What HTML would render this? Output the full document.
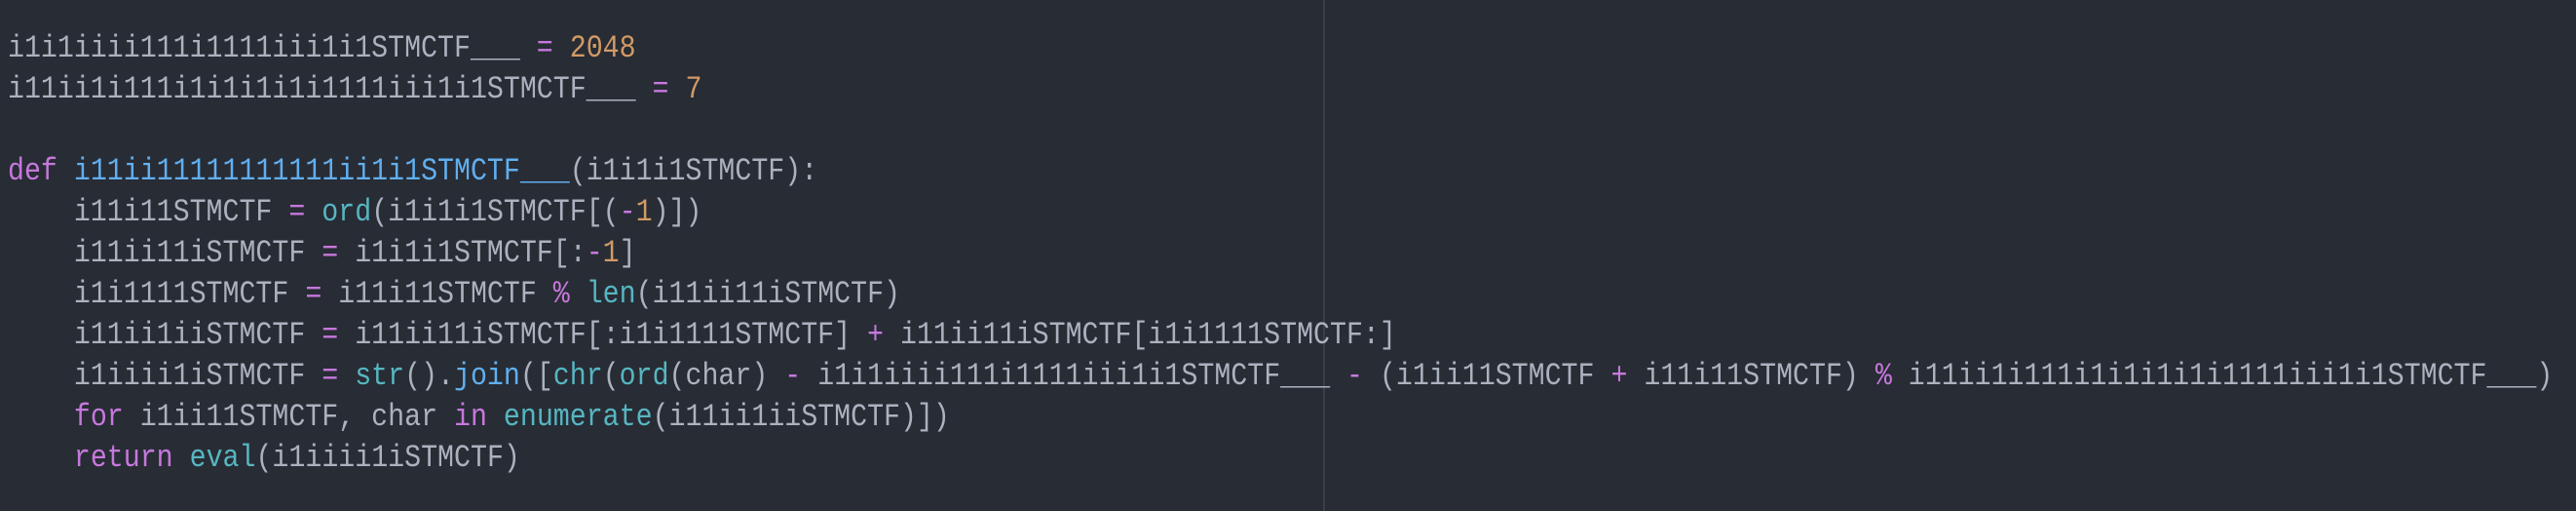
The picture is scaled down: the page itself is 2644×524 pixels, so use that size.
<!DOCTYPE html>
<html><head><meta charset="utf-8"><style>
html,body{margin:0;padding:0;background:#282c34;width:2644px;height:524px;overflow:hidden;position:relative}
pre{position:absolute;left:8px;top:29px;margin:0;font-family:"Liberation Mono",monospace;font-size:28.28px;line-height:42px;color:#abb2bf;}
pre span.l{display:block;height:42px;transform:scaleY(1.15);transform-origin:50% 50%}
.k{color:#c678dd}.n{color:#d19a66}.f{color:#61afef}.b{color:#56b6c2}
.r{position:absolute;left:1358px;top:0;width:2px;height:524px;background:#3a3e46}
</style></head><body>
<div class="r"></div>
<pre><span class="l">i1i1iiii111i1111iii1i1STMCTF___ <span class="k">=</span> <span class="n">2048</span></span><span class="l">i11ii1i111i1i1i1i1i1111iii1i1STMCTF___ <span class="k">=</span> <span class="n">7</span></span><span class="l"> </span><span class="l"><span class="k">def</span> <span class="f">i11ii11111111111ii1i1STMCTF___</span>(i1i1i1STMCTF):</span><span class="l">    i11i11STMCTF <span class="k">=</span> <span class="b">ord</span>(i1i1i1STMCTF[(<span class="k">-</span><span class="n">1</span>)])</span><span class="l">    i11ii11iSTMCTF <span class="k">=</span> i1i1i1STMCTF[:<span class="k">-</span><span class="n">1</span>]</span><span class="l">    i1i1111STMCTF <span class="k">=</span> i11i11STMCTF <span class="k">%</span> <span class="b">len</span>(i11ii11iSTMCTF)</span><span class="l">    i11ii1iiSTMCTF <span class="k">=</span> i11ii11iSTMCTF[:i1i1111STMCTF] <span class="k">+</span> i11ii11iSTMCTF[i1i1111STMCTF:]</span><span class="l">    i1iiii1iSTMCTF <span class="k">=</span> <span class="b">str</span>().<span class="f">join</span>([<span class="b">chr</span>(<span class="b">ord</span>(char) <span class="k">-</span> i1i1iiii111i1111iii1i1STMCTF___ <span class="k">-</span> (i1ii11STMCTF <span class="k">+</span> i11i11STMCTF) <span class="k">%</span> i11ii1i111i1i1i1i1i1111iii1i1STMCTF___)</span><span class="l">    <span class="k">for</span> i1ii11STMCTF, char <span class="k">in</span> <span class="b">enumerate</span>(i11ii1iiSTMCTF)])</span><span class="l">    <span class="k">return</span> <span class="b">eval</span>(i1iiii1iSTMCTF)</span></pre>
</body></html>
